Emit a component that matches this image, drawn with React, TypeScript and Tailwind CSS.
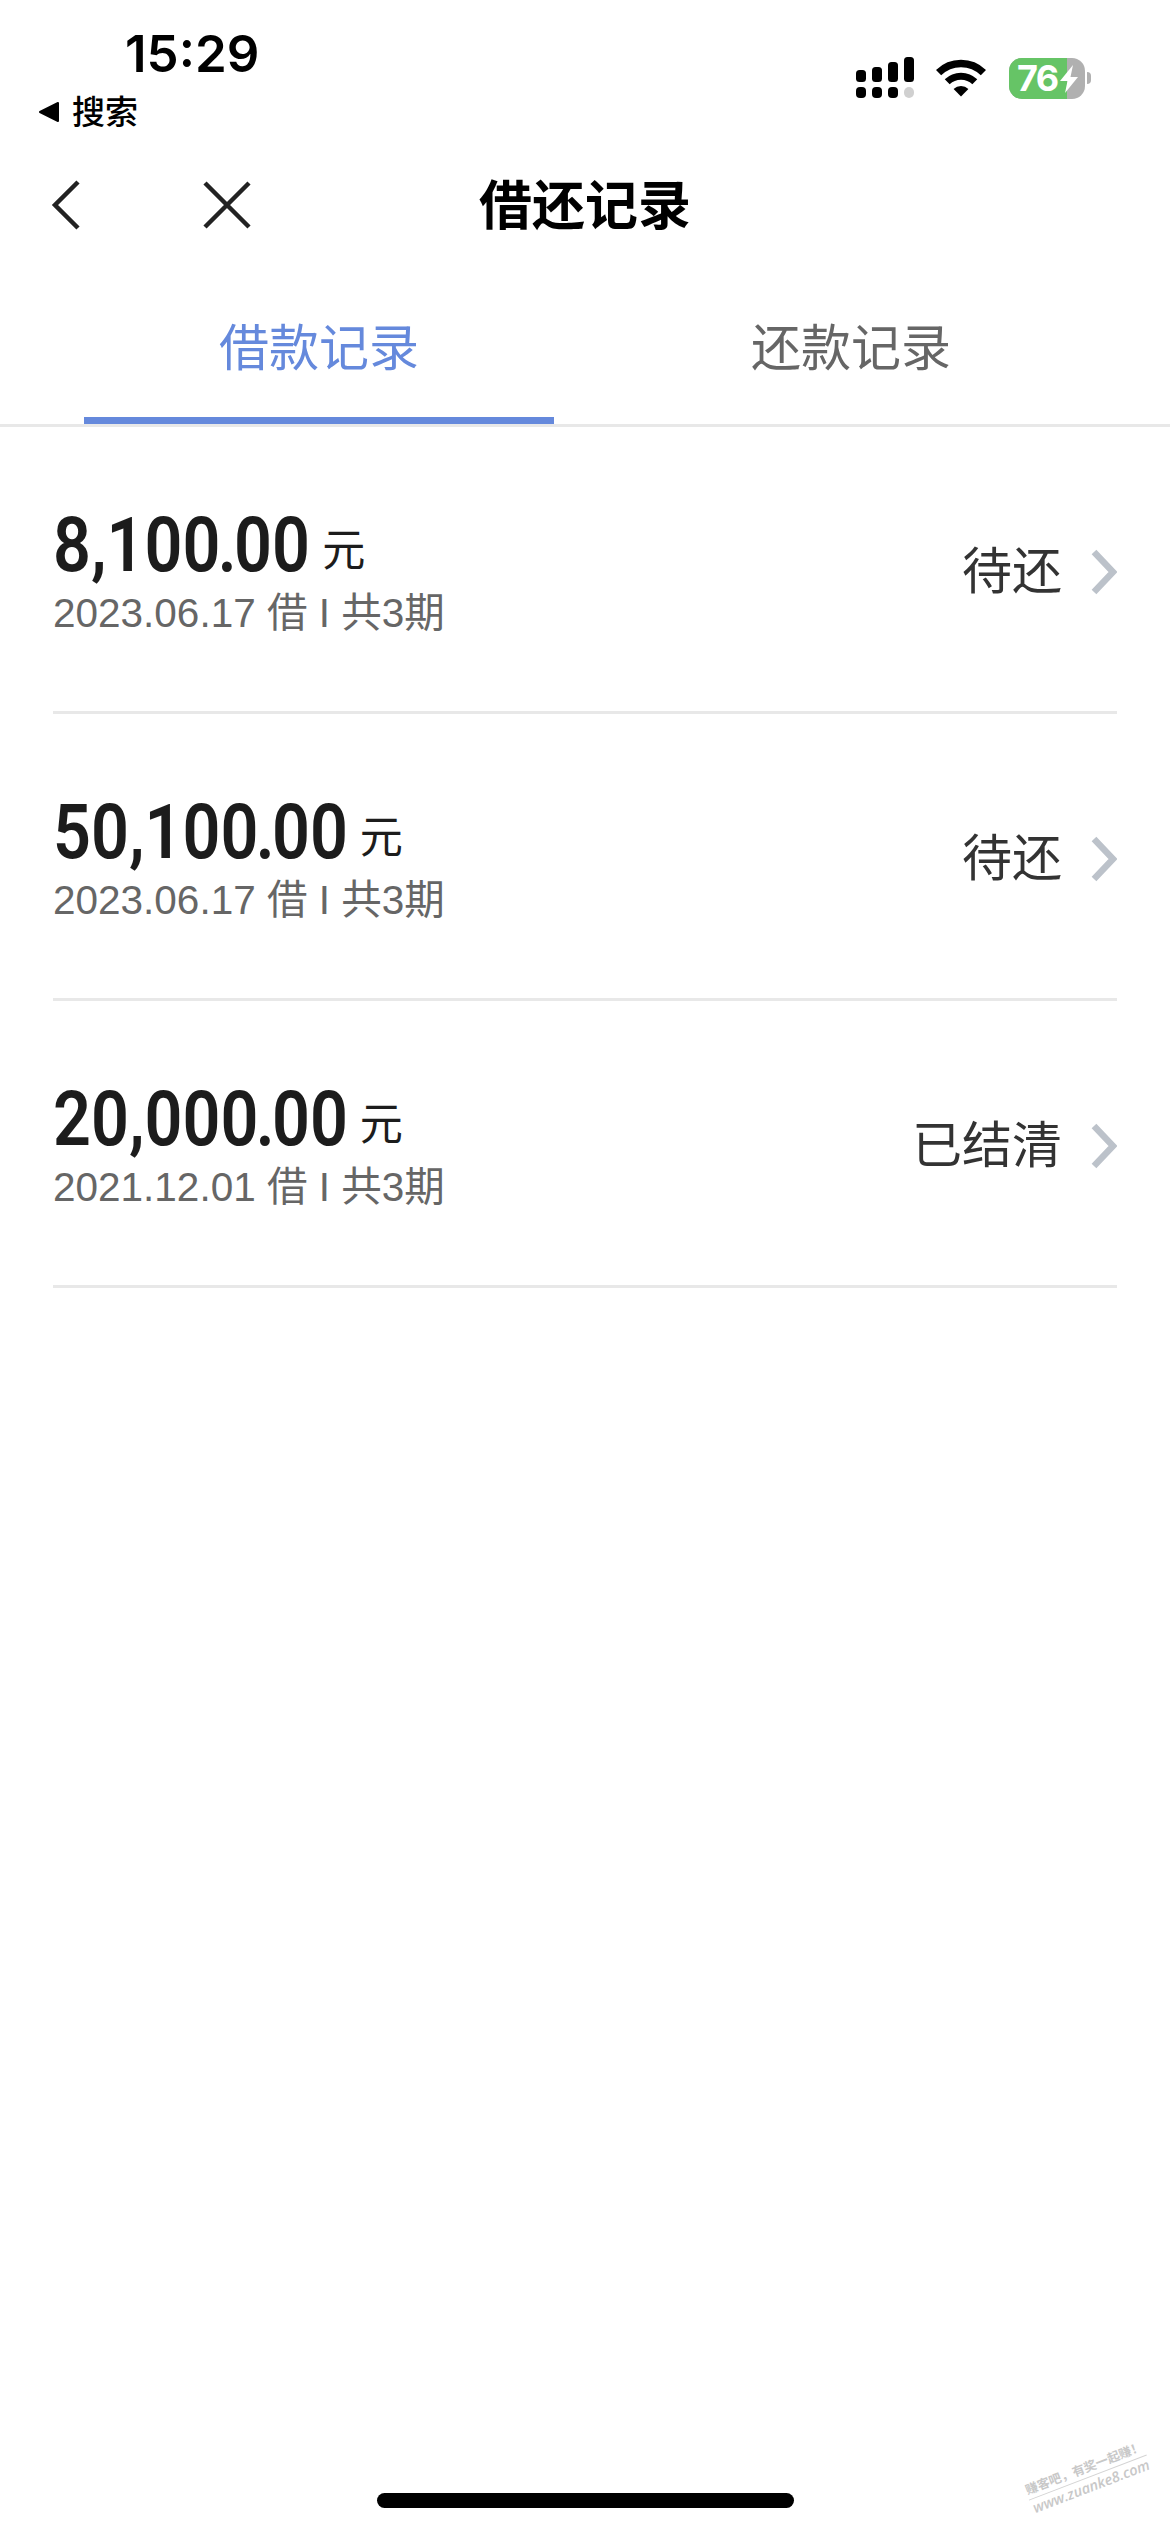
import React from "react";

const records = [
  { whole: "8,100", cents: "00", date: "2023.06.17", terms: 3, status: "待还" },
  { whole: "50,100", cents: "00", date: "2023.06.17", terms: 3, status: "待还" },
  { whole: "20,000", cents: "00", date: "2021.12.01", terms: 3, status: "已结清" },
];

function SignalIcon() {
  return (
    <svg width="60" height="44" viewBox="0 0 60 44" className="shrink-0">
      <rect x="1" y="14" width="10" height="12" rx="3.5" />
      <rect x="17" y="11" width="10" height="15" rx="3.5" />
      <rect x="33" y="6" width="10" height="20" rx="3.5" />
      <rect x="49" y="1" width="10" height="25" rx="3.5" />
      <rect x="1" y="31" width="10" height="11" rx="4" />
      <rect x="17" y="31" width="10" height="11" rx="4" />
      <rect x="33" y="31" width="10" height="11" rx="4" />
      <rect x="49" y="31" width="10" height="11" rx="5" fill="#d0d0d0" />
    </svg>
  );
}

function WifiIcon() {
  return (
    <svg width="50" height="38" viewBox="0 0 50 38" fill="none" className="shrink-0">
      <path d="M2.6 13.6 A32 32 0 0 1 47.4 13.6" stroke="#000" strokeWidth="7.4" />
      <path d="M11.2 22.8 A19.7 19.7 0 0 1 38.8 22.8" stroke="#000" strokeWidth="7" />
      <path d="M25 37.4 L17.6 30 A10.4 10.4 0 0 1 32.4 30 Z" fill="#000" />
    </svg>
  );
}

function Battery() {
  return (
    <div className="flex items-center gap-[2px]">
      <div className="relative flex h-[41px] w-[76px] items-center rounded-[13px] bg-[#b0b0b0]">
        <div className="absolute inset-y-0 left-0 w-[58px] rounded-l-[13px] bg-[#66c466]" />
        <span className="relative ml-[8px] font-['Inter'] text-[36px] leading-[41px] font-bold tracking-[-1.5px] text-white">
          76
        </span>
        <svg width="20" height="28" viewBox="0 0 20 28" className="absolute top-[7px] left-[50px]">
          <path d="M14 0 L1 16 H8.5 L6 28 L19 12 H11.5 Z" fill="#fff" />
        </svg>
      </div>
      <div className="h-[12px] w-[4px] rounded-r-full bg-[#b0b0b0]" />
    </div>
  );
}

function StatusBar() {
  return (
    <header className="flex h-[150px] justify-between text-black">
      <div className="flex flex-col">
        <span className="mt-[28px] ml-[125px] font-['Inter'] text-[51px] leading-[52px] font-semibold">
          15:29
        </span>
        <div className="mt-[11px] ml-[38px] flex h-[42px] items-center gap-[12px]">
          <svg width="22" height="22" viewBox="0 0 22 22">
            <path d="M2 11 L20 2 V20 Z" stroke="#000" strokeWidth="2" strokeLinejoin="round" />
          </svg>
          <span className="text-[33px] leading-none font-medium">搜索</span>
        </div>
      </div>
      <div className="mt-[56px] mr-[79px] flex h-[44px] items-center">
        <SignalIcon />
        <div className="ml-[21px]">
          <WifiIcon />
        </div>
        <div className="ml-[23px]">
          <Battery />
        </div>
      </div>
    </header>
  );
}

function TitleBar() {
  return (
    <div className="grid h-[110px] grid-cols-[1fr_auto_1fr] items-center">
      <div className="flex items-center pl-[50px]">
        <svg width="30" height="50" viewBox="0 0 30 50" fill="none">
          <path d="M28 2 L5 25 L28 48" stroke="#222" strokeWidth="4.5" />
        </svg>
        <svg width="48" height="48" viewBox="0 0 48 48" fill="none" className="ml-[123px]">
          <path d="M2 2 L46 46 M46 2 L2 46" stroke="#222" strokeWidth="4.5" />
        </svg>
      </div>
      <h1 className="pt-[3px] text-[53px] leading-none font-bold text-black">借还记录</h1>
    </div>
  );
}

function Tabs() {
  return (
    <nav className="flex h-[167px] border-b-[3px] border-[#e8e8e8] px-[53px] text-[50px]">
      <div className="w-1/2 px-[31px]">
        <span className="flex h-full items-center justify-center border-b-[7px] border-[#6589dc] pt-[21px] text-[#6589dc]">
          借款记录
        </span>
      </div>
      <div className="flex w-1/2 items-center justify-center pt-[14px] text-[#666]">还款记录</div>
    </nav>
  );
}

function RecordRow({ whole, cents, date, terms, status }: (typeof records)[number]) {
  return (
    <li className="flex h-[287px] items-center justify-between border-b-[3px] border-[#e8e8e8]">
      <div className="pt-[14px]">
        {/* Condensed numerals; the unit is stretched back to its own width */}
        <div className="flex h-[73px] origin-left scale-x-[0.874] items-baseline text-[#1c1c1c]">
          <span className="font-['Roboto'] text-[76px] leading-[70px] font-semibold">
            {whole}
            <span className="-mx-[3px]">.</span>
            {cents}
          </span>
          <span className="relative -top-[5px] ml-[14px] origin-left scale-x-[1.12] text-[44px] leading-none">
            元
          </span>
        </div>
        <p className="text-[40.5px] leading-[60px] text-[#666]">
          {date} 借 I 共{terms}期
        </p>
      </div>
      <div className="flex items-center pt-[5px] text-[50px] text-[#333]">
        <span className="pt-[2px]">{status}</span>
        <svg width="26" height="46" viewBox="0 0 26 46" fill="none" className="ml-[29px]">
          <path d="M3 3 L22 23 L3 43" stroke="#bcc2ca" strokeWidth="6.5" />
        </svg>
      </div>
    </li>
  );
}

export default function App() {
  return (
    <div className="relative flex h-[2532px] w-[1170px] flex-col overflow-hidden bg-white font-['Liberation_Sans','Noto_Sans_CJK_SC',sans-serif]">
      <StatusBar />
      <TitleBar />
      <Tabs />
      <ul className="flex flex-1 flex-col px-[53px]">
        {records.map((r) => (
          <RecordRow key={r.whole} {...r} />
        ))}
      </ul>

      {/* Home indicator */}
      <div className="mx-auto mb-[24px] h-[15px] w-[417px] rounded-full bg-black" />

      {/* Watermark */}
      <div className="absolute top-[2460px] left-[1025px] w-[126px] rotate-[-21deg] text-center whitespace-nowrap text-[#c8c8c8]">
        <div className="border-b border-[#d4d4d4] text-[12.5px] leading-[17px] font-bold">赚客吧，有奖一起赚！</div>
        <div className="font-['Open_Sans'] text-[14.5px] leading-[18px] font-semibold italic">www.zuanke8.com</div>
      </div>
    </div>
  );
}
